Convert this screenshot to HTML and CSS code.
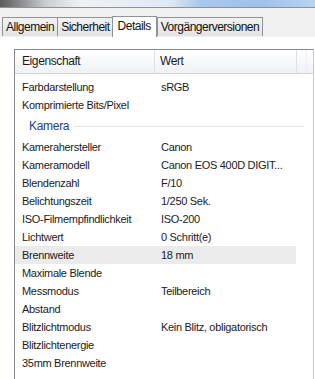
FILE: index.html
```html
<!DOCTYPE html>
<html>
<head>
<meta charset="utf-8">
<link rel="stylesheet" href="styles.css">
</head>
<body>
<div class="titlebar"></div>
<div class="tabstrip">
  <div class="tab">Allgemein</div>
  <div class="tab">Sicherheit</div>
  <div class="tab active">Details</div>
  <div class="tab">Vorgängerversionen</div>
</div>
<div class="pane">
  <div class="list">
    <div class="header">
      <div class="hcell c1">Eigenschaft</div>
      <div class="hcell c2">Wert</div>
      <div class="hcell c3"></div>
    </div>
    <div class="rows">
      <div class="row"><span class="k">Farbdarstellung</span><span class="v">sRGB</span></div>
      <div class="row"><span class="k">Komprimierte Bits/Pixel</span><span class="v"></span></div>
      <div class="group"><span class="gname">Kamera</span><span class="gline"></span></div>
      <div class="row"><span class="k">Kamerahersteller</span><span class="v">Canon</span></div>
      <div class="row"><span class="k">Kameramodell</span><span class="v">Canon EOS 400D DIGIT...</span></div>
      <div class="row"><span class="k">Blendenzahl</span><span class="v">F/10</span></div>
      <div class="row"><span class="k">Belichtungszeit</span><span class="v">1/250 Sek.</span></div>
      <div class="row"><span class="k">ISO-Filmempfindlichkeit</span><span class="v">ISO-200</span></div>
      <div class="row"><span class="k">Lichtwert</span><span class="v">0 Schritt(e)</span></div>
      <div class="row sel"><span class="k">Brennweite</span><span class="v">18 mm</span></div>
      <div class="row"><span class="k">Maximale Blende</span><span class="v"></span></div>
      <div class="row"><span class="k">Messmodus</span><span class="v">Teilbereich</span></div>
      <div class="row"><span class="k">Abstand</span><span class="v"></span></div>
      <div class="row"><span class="k">Blitzlichtmodus</span><span class="v">Kein Blitz, obligatorisch</span></div>
      <div class="row"><span class="k">Blitzlichtenergie</span><span class="v"></span></div>
      <div class="row"><span class="k">35mm Brennweite</span><span class="v"></span></div>
    </div>
  </div>
</div>
</body>
</html>
```
FILE: styles.css
```css
html, body {
  margin: 0;
  padding: 0;
  width: 315px;
  height: 379px;
  overflow: hidden;
  background: #ffffff;
  font-family: "Liberation Sans", Arial, sans-serif;
  font-size: 11px;
  letter-spacing: -0.3px;
  color: #1b1b1b;
}
.titlebar {
  height: 7px;
  background: linear-gradient(90deg, #5a5a5a 0px, #8a8a8a 20px, #c9ccd0 45px, #eef2f6 80px, #dfe9f4 170px, #a9c8ea 200px, #9fc2ea 260px, #b8d3ef 315px);
  border-bottom: 1px solid #8e9195;
}
.tabstrip {
  height: 28px;
  background: #f0f0f0;
  display: flex;
  align-items: flex-end;
  padding-left: 2px;
  border-bottom: 1px solid #f0f0f0;
}
.tab {
  height: 18px;
  line-height: 18px;
  padding: 0 3px;
  border: 1px solid #8f939a;
  border-bottom: none;
  margin-right: -1px;
  background: linear-gradient(#f2f2f2, #e3e3e3);
  font-size: 12px;
  letter-spacing: -0.5px;
  color: #111;
}
.tab.active {
  height: 20px;
  line-height: 18px;
  background: #ffffff;
  padding: 0 5px;
  position: relative;
  z-index: 1;
  margin: 0 0 -1px -1px;
}
.pane {
  padding: 12px 0 0 14px;
}
.list {
  border-left: 1px solid #828790;
  border-top: 1px solid #828790;
  border-right: 1px solid #c8cbd0;
  width: 298px;
  height: 340px;
}
.header {
  display: flex;
  height: 23px;
  background: linear-gradient(#ffffff, #f7f8fa 50%, #f0f1f4);
  border-bottom: 1px solid #d5d5d5;
}
.hcell {
  line-height: 22px;
  padding-left: 7px;
  font-size: 12px;
  letter-spacing: -0.4px;
  box-sizing: border-box;
}
.c1 { width: 140px; border-right: 1px solid #dde0e5; }
.c2 { width: 142px; border-right: 1px solid #dde0e5; padding-left: 5px; }
.c3 { width: 10px; border-right: 1px solid #eceef2; }
.rows {
  padding-top: 4px;
}
.row {
  display: flex;
  height: 18px;
  line-height: 18px;
  width: 281px;
}
.row.sel {
  background: #ebebeb;
}
.k {
  width: 146px;
  padding-left: 7px;
  box-sizing: border-box;
  flex: none;
  white-space: nowrap;
}
.v {
  white-space: nowrap;
}
.group {
  display: flex;
  align-items: center;
  height: 24px;
  padding-left: 14px;
  width: 275px;
}
.gname {
  color: #1e3c8e;
  font-size: 12px;
  letter-spacing: -0.3px;
  margin-right: 5px;
}
.gline {
  flex: 1;
  height: 1px;
  background: #e2e5ea;
}
```
